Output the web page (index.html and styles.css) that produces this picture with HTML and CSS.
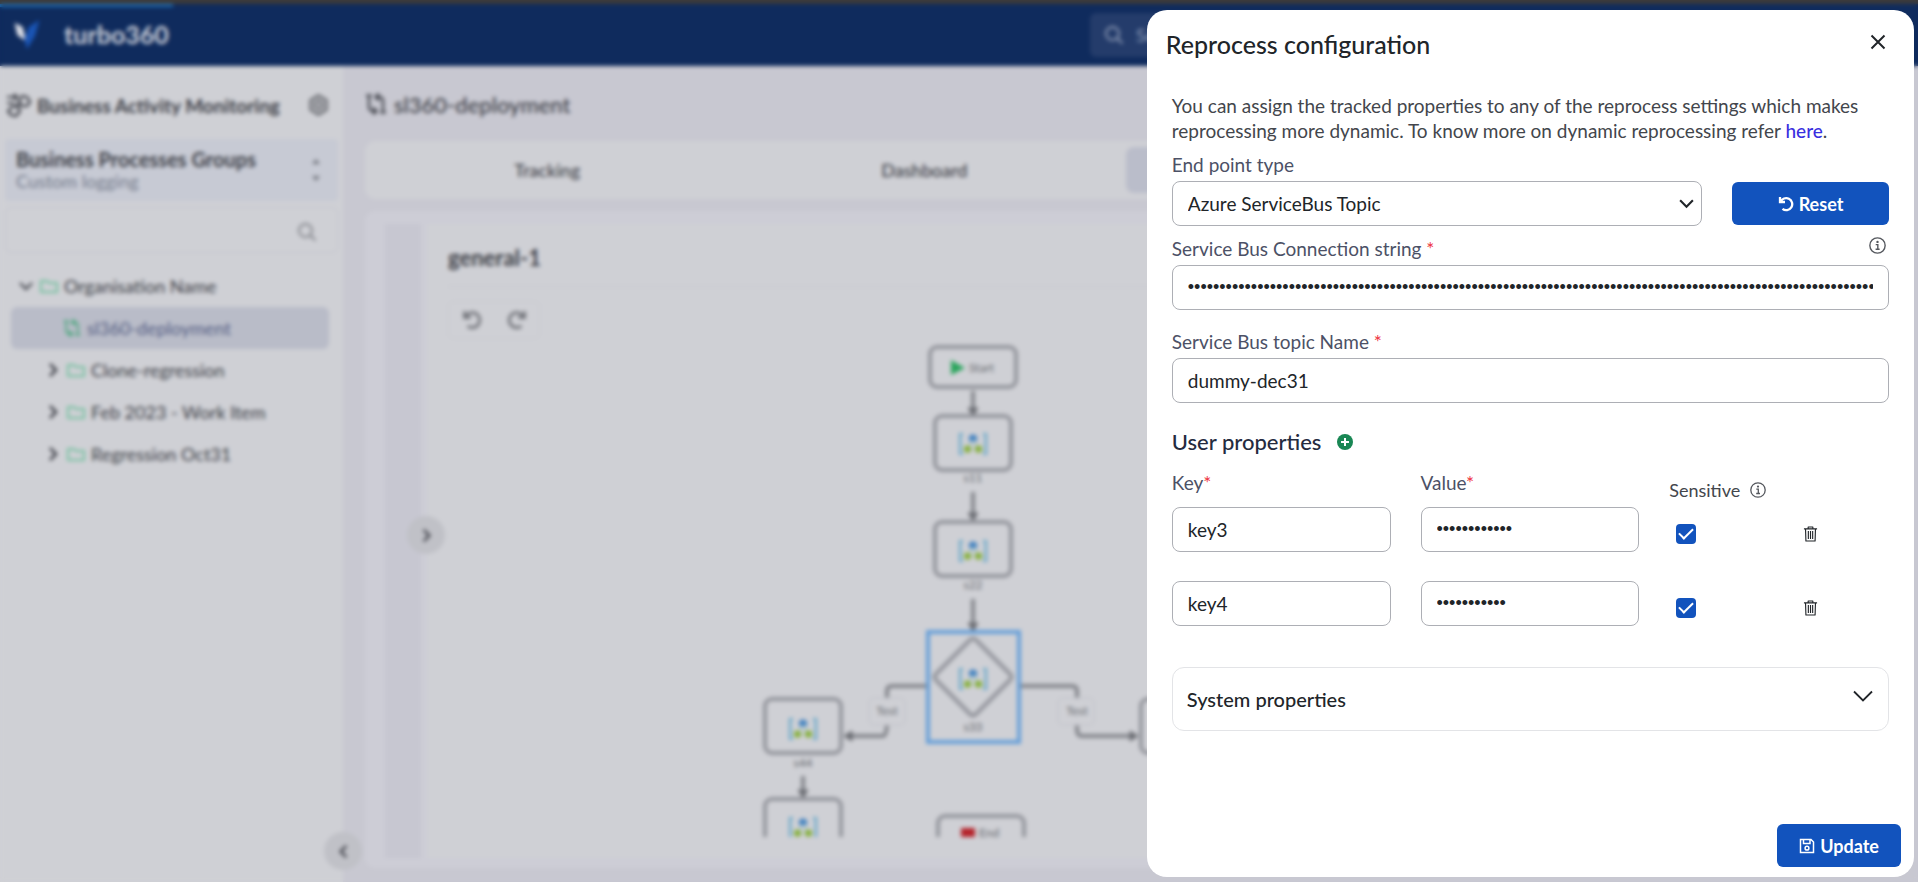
FILE: index.html
```html
<!DOCTYPE html>
<html lang="en">
<head>
<meta charset="utf-8">
<title>Business Activity Monitoring - Reprocess configuration</title>
<link rel="stylesheet" href="styles.css">
</head>
<body>
<svg class="defs" aria-hidden="true">
  <symbol id="folder" viewBox="0 0 20 16"><path d="M2 3.500v10h16V4.500h-8L8 2.500H2z" fill="none" stroke="currentColor" stroke-width="2" stroke-linejoin="round"/></symbol>
  <symbol id="process" viewBox="0 0 22 22"><path d="M4 2v12q0 4 4 4h3M8 14.500l3.500 3.500L8 21.500M18 20V8q0-4-4-4h-3M14 .5 10.500 4 14 7.500M1 2.500h6M15 19.500h6" fill="none" stroke="currentColor" stroke-width="2.200"/></symbol>
  <symbol id="search" viewBox="0 0 20 20"><circle cx="8.500" cy="8.500" r="6.500" fill="none" stroke="currentColor" stroke-width="2"/><path d="m13 13 5.500 5.500" stroke="currentColor" stroke-width="2"/></symbol>
  <symbol id="right" viewBox="0 0 16 16"><path d="m5 2 6 6-6 6" fill="none" stroke="currentColor" stroke-width="2.500"/></symbol>
  <symbol id="left" viewBox="0 0 16 16"><path d="M11 2 5 8l6 6" fill="none" stroke="currentColor" stroke-width="2.500"/></symbol>
  <symbol id="down" viewBox="0 0 16 16"><path d="m2 5 6 6 6-6" fill="none" stroke="currentColor" stroke-width="2"/></symbol>
  <symbol id="undo" viewBox="0 0 16 16"><path d="M2 1v5h5M2.600 6A6 6 0 1 1 4.500 12.800" fill="none" stroke="currentColor" stroke-width="2.300"/></symbol>
  <symbol id="info" viewBox="0 0 16 16"><circle cx="8" cy="8" r="7.200" fill="none" stroke="currentColor" stroke-width="1.300"/><circle cx="8" cy="4.600" r="1.100" fill="currentColor"/><path d="M6.300 7.200h2v4.200M6.200 11.500h3.800" fill="none" stroke="currentColor" stroke-width="1.300"/></symbol>
  <symbol id="trash" viewBox="0 0 16 18"><path d="M1 3.500h14M5.500 3.300V1.500h5v1.800M2.700 3.500l.4 13h9.800l.4-13M5.700 5.800v8.500M8 5.800v8.500M10.300 5.800v8.500" fill="none" stroke="currentColor" stroke-width="1.200" stroke-linejoin="round"/></symbol>
  <symbol id="db" viewBox="0 0 30 24"><path d="M4 1H1v22h3M26 1h3v22h-3" fill="none" stroke="#63a6c9" stroke-width="2.500"/><circle cx="15" cy="6" r="4.500" fill="#3f80c0"/><path d="M15 8 9 17h12z" fill="none" stroke="#a9c4c8" stroke-width="1.500"/><circle cx="9" cy="17.500" r="4" fill="#86b03c"/><circle cx="21" cy="17.500" r="4" fill="#86b03c"/></symbol>
</svg>

<div class="app">
  <div class="window-edge"></div>
  <header class="topbar">
    <div class="progress"></div>
    <svg class="logo" viewBox="0 0 30 34"><path d="M1 3 10 8 14 24 4 17z" fill="#dfe2ea"/><path d="M29 0 17 8 12 22 15 33 24 18z" fill="#1a55b5"/></svg>
    <span class="brand">turbo360</span>
    <div class="global-search"><svg><use href="#search"/></svg><span>Search</span></div>
  </header>

  <div class="columns">
    <aside class="sidebar">
      <div class="side-title">
        <svg class="bam" viewBox="0 0 26 26"><g fill="none" stroke="currentColor" stroke-width="2.200"><path d="m17 4 5 1 3 5-3 4-5 0-3-5zM8 14l5 1 2 4-4 5-5-1-3-4zM11 14l4-3M2 5h10M2 11h7M9 2l3 3-3 3"/></g></svg>
        <h2>Business Activity Monitoring</h2>
        <svg class="gear" viewBox="0 0 20 20"><path d="m10 1 7.500 4.500v9L10 19l-7.500-4.500v-9z" fill="none" stroke="currentColor" stroke-width="2.400"/><circle cx="10" cy="10" r="3.500" fill="none" stroke="currentColor" stroke-width="2.400"/></svg>
      </div>
      <div class="group">
        <div><strong>Business Processes Groups</strong><span>Custom logging</span></div>
        <svg viewBox="0 0 10 28"><path d="M1 8 5 3l4 5zM1 20l4 5 4-5z" fill="currentColor"/></svg>
      </div>
      <div class="side-search"><input type="search" aria-label="Search groups"><svg><use href="#search"/></svg></div>
      <ul class="tree">
        <li class="root"><svg class="chev"><use href="#down"/></svg><svg class="fold"><use href="#folder"/></svg>Organisation Name</li>
        <li class="selected"><svg class="proc"><use href="#process"/></svg>sl360-deployment</li>
        <li class="child"><svg class="chev"><use href="#right"/></svg><svg class="fold"><use href="#folder"/></svg>Clone-regression</li>
        <li class="child"><svg class="chev"><use href="#right"/></svg><svg class="fold"><use href="#folder"/></svg>Feb 2023 - Work Item</li>
        <li class="child"><svg class="chev"><use href="#right"/></svg><svg class="fold"><use href="#folder"/></svg>Regression Oct31</li>
      </ul>
      <button class="round collapse" aria-label="Collapse sidebar"><svg><use href="#left"/></svg></button>
    </aside>

    <main class="main">
      <h1 class="page-title"><svg><use href="#process"/></svg>sl360-deployment</h1>
      <nav class="tabs">
        <button>Tracking</button><button>Dashboard</button><button class="active">Business Process</button><button>Settings</button>
      </nav>
      <section class="panel">
        <div class="strip"><button class="round expand" aria-label="Expand"><svg><use href="#right"/></svg></button></div>
        <div class="designer">
          <h3>general-1</h3>
          <div class="tools"><button aria-label="Undo"><svg><use href="#undo"/></svg></button><button aria-label="Redo"><svg class="flip"><use href="#undo"/></svg></button></div>
          <svg class="flow">
            <path class="lines" d="M525 52v20M525 153v24M525 260v32M342 0M355 437v18M479 347h-35q-5 0-5 5v30q0 15-4 15h-34M571 347h53q5 0 5 5v38q0 7 5 7h50"/>
            <path class="heads" d="m520 69 5 8 5-8zM520 174l5 8 5-8zM520 284l5 8 5-8zM350 451l5 8 5-8zM404 392l-8 5 8 5zM682 392l8 5-8 5z"/>
            <g class="node">
              <rect x="482" y="8" width="86" height="40" rx="7"/>
              <rect x="487" y="77" width="76" height="54" rx="7"/>
              <rect x="487" y="183" width="76" height="54" rx="7"/>
              <rect x="317" y="360" width="76" height="54" rx="7"/>
              <rect x="317" y="460" width="76" height="54" rx="7"/>
              <rect x="693" y="360" width="76" height="54" rx="7"/>
              <rect x="490" y="477" width="86" height="40" rx="7"/>
              <path d="m522 301-34 34q-3 3 0 6l34 34q3 3 6 0l34-34q3-3 0-6l-34-34q-3-3-6 0z"/>
            </g>
            <rect class="picked" x="480" y="293" width="91" height="110"/>
            <rect class="chip" x="421" y="359" width="36" height="27" rx="5"/><rect class="chip" x="610" y="359" width="36" height="27" rx="5"/>
            <use href="#db" x="510" y="94" width="30" height="22"/><use href="#db" x="510" y="201" width="30" height="22"/><use href="#db" x="510" y="329" width="30" height="22"/><use href="#db" x="340" y="379" width="30" height="22"/><use href="#db" x="340" y="478" width="30" height="22"/>
            <path d="M503 21v15l14-7z" fill="#2ba55d"/><rect x="513" y="489" width="14" height="9" fill="#b5232b"/>
            <g class="captions"><text x="521" y="33">Start</text><text x="531" y="498">End</text></g>
            <g class="names"><text x="525" y="143">s11</text><text x="525" y="250">s22</text><text x="525" y="392">s33</text><text x="355" y="428">s44</text><text x="439" y="376">Test</text><text x="629" y="376">Test</text></g>
          </svg>
        </div>
      </section>
    </main>
  </div>
</div>

<div class="overlay">
  <form class="dialog" role="dialog" aria-labelledby="dlg-title">
    <header class="dialog-head">
      <h2 id="dlg-title">Reprocess configuration</h2>
      <button type="button" class="close" aria-label="Close"><svg viewBox="0 0 16 16"><path d="m1.500 1.500 13 13M14.500 1.500l-13 13" stroke="currentColor" stroke-width="2"/></svg></button>
    </header>
    <div class="dialog-body">
      <p class="intro">You can assign the tracked properties to any of the reprocess settings which makes reprocessing more dynamic. To know more on dynamic reprocessing refer <a href="#">here</a>.</p>

      <label class="label" for="endpoint">End point type</label>
      <div class="endpoint">
        <div class="select"><select id="endpoint"><option>Azure ServiceBus Topic</option></select><svg><use href="#down"/></svg></div>
        <button type="button" class="primary"><svg><use href="#undo"/></svg>Reset</button>
      </div>

      <div class="label-row"><label class="label" for="conn">Service Bus Connection string <b>*</b></label><svg class="info"><use href="#info"/></svg></div>
      <input class="field" id="conn" type="password" value="Endpoint=sb://demo.servicebus.example/;SharedAccessKeyName=RootManageSharedAccessKey;SharedAccessKey=00000000">

      <label class="label topic" for="topic">Service Bus topic Name <b>*</b></label>
      <input class="field" id="topic" type="text" value="dummy-dec31">

      <h3 class="section">User properties <button type="button" class="add" aria-label="Add property"><svg viewBox="0 0 16 16"><circle cx="8" cy="8" r="8" fill="#198754"/><path d="M8 4v8M4 8h8" stroke="#fff" stroke-width="2"/></svg></button></h3>

      <div class="props">
        <label class="label" for="key3">Key<b>*</b></label>
        <label class="label" for="val3">Value<b>*</b></label>
        <span class="sensitive">Sensitive <svg class="info"><use href="#info"/></svg></span>
        <span></span>

        <input class="field" id="key3" type="text" value="key3">
        <input class="field" id="val3" type="password" value="secretvalue1">
        <input class="check" type="checkbox" aria-label="Sensitive key3" checked>
        <button type="button" class="trash" aria-label="Delete key3"><svg><use href="#trash"/></svg></button>

        <input class="field" type="text" aria-label="Key" value="key4">
        <input class="field" type="password" aria-label="Value" value="secretvalue">
        <input class="check" type="checkbox" aria-label="Sensitive key4" checked>
        <button type="button" class="trash" aria-label="Delete key4"><svg><use href="#trash"/></svg></button>
      </div>

      <button type="button" class="accordion">System properties<svg viewBox="0 0 20 12"><path d="m1 1.500 9 9 9-9" fill="none" stroke="currentColor" stroke-width="1.800"/></svg></button>
    </div>
    <footer class="dialog-foot">
      <button type="submit" class="primary"><svg viewBox="0 0 16 16"><path d="M1.500 1.500h10.500l2.500 2.500v10.500h-13zM4.500 1.500v4h6.500v-4" fill="none" stroke="currentColor" stroke-width="1.500"/><circle cx="8" cy="10.200" r="1.900" fill="none" stroke="currentColor" stroke-width="1.500"/></svg>Update</button>
    </footer>
  </form>
</div>
</body>
</html>
```
FILE: styles.css
```css
* { box-sizing: border-box; }
html, body { height: 100%; }
body {
  margin: 0;
  overflow: hidden;
  font-family: Lato, "Open Sans", sans-serif;
  font-size: 18px;
  color: #212529;
  background: #c8c8d1;
}
button, input, select { font: inherit; color: inherit; }
button { padding: 0; border: 0; background: none; }
h1, h2, h3, p, ul { margin: 0; padding: 0; }
svg { display: block; flex: none; }
.defs { position: absolute; width: 0; height: 0; }

/* Application behind the dialog */
.app { isolation: isolate; display: flex; flex-direction: column; height: 100vh; color: #3d3f47; }
.window-edge { height: 4px; flex: none; background: #3d3b3a; }
.topbar { position: relative; display: flex; align-items: center; flex: none; height: 62px; padding: 0 12px; background: #0f2b5d; }
.progress { position: absolute; left: 0; top: 0; width: 9%; height: 3px; background: #1a68b0; }
.logo { width: 30px; height: 30px; margin-right: 22px; }
.brand { font-size: 25px; font-weight: 700; line-height: 28px; padding-bottom: 2px; color: #ccd0da; }
.global-search { position: absolute; left: 1090px; display: flex; align-items: center; gap: 12px; width: 360px; height: 44px; padding: 0 14px; border-radius: 6px; background: #243c6b; color: #8d9ab5; }
.global-search svg { width: 20px; height: 20px; }

.columns { display: flex; flex: 1; min-height: 0; }
.sidebar { position: relative; flex: none; width: 343px; padding: 19px 5px 0; background: #cfd0d5; }
.side-title { display: flex; align-items: center; height: 40px; margin-bottom: 14px; padding-right: 9px; }
.side-title h2 { flex: 1; margin-left: 6px; font-size: 19px; font-weight: 700; white-space: nowrap; }
.bam { width: 26px; height: 26px; }
.gear { width: 21px; height: 22px; color: #65676d; }
.group { display: flex; justify-content: space-between; align-items: center; height: 62px; padding: 0 17px 0 11px; border-radius: 4px; background: #c7cad4; }
.group strong, .group span { display: block; line-height: 22px; }
.group strong { font-size: 20px; font-weight: 700; }
.group span { color: #747b8b; }
.group svg { width: 10px; height: 28px; color: #74777f; }
.side-search { display: flex; align-items: center; height: 46px; margin: 6px 0 12px; padding: 4px 20px 0 0; border: 1px solid #c5c6cd; border-radius: 6px; }
.side-search input { flex: 1; min-width: 0; border: 0; background: none; }
.side-search svg { width: 20px; height: 20px; color: #84868c; }
.tree { list-style: none; }
.tree li { display: flex; align-items: center; height: 42px; margin: 0 9px 0 6px; border-radius: 6px; }
.tree .root { padding-left: 7px; }
.tree .child { padding-left: 34px; }
.tree .selected { padding-left: 52px; background: #b9bcc8; color: #545d83; }
.chev { width: 16px; height: 16px; margin-right: 5px; }
.fold { width: 20px; height: 17px; margin-right: 5px; color: #74c09f; }
.proc { width: 18px; height: 18px; margin-right: 6px; color: #4aa67c; }
.round { position: absolute; display: grid; place-items: center; width: 38px; height: 38px; border-radius: 50%; background: #c0c1c7; }
.round svg { width: 15px; height: 15px; }
.collapse { right: -19px; bottom: 12px; z-index: 1; }
.expand { right: -24px; top: 292px; }

.main { display: flex; flex-direction: column; flex: 1; min-width: 0; padding: 17px 57px 14px 22px; }
.page-title { display: flex; align-items: center; gap: 7px; height: 42px; margin-bottom: 16px; font-size: 22px; font-weight: 500; }
.page-title svg { width: 22px; height: 22px; }
.tabs { display: grid; grid-template-columns: repeat(4, 1fr); gap: 25px; margin-bottom: 12px; padding: 6px; border-radius: 10px; background: #cfd0d5; }
.tabs button { height: 46px; border-radius: 8px; font-weight: 500; }
.tabs .active { background: #babdca; }
.panel { display: flex; flex: 1; min-height: 0; gap: 6px; padding: 13px 20px 10px; border-radius: 10px; background: #cdcdd6; }
.strip { position: relative; flex: none; width: 36px; background: #c7c7d1; }
.designer { display: flex; flex-direction: column; flex: 1; min-width: 0; padding: 12px 21px 21px; background: #cfd0d5; }
.designer h3 { flex: none; height: 51px; padding-top: 8px; border-bottom: 1px solid #c6c7cd; font-size: 22px; line-height: 28px; }
.tools { display: flex; align-items: center; justify-content: space-around; flex: none; width: 92px; height: 38px; margin-top: 14px; border: 1px solid #c8c9cf; border-radius: 6px; color: #74767c; }
.tools svg { width: 20px; height: 20px; }
.flip { transform: scaleX(-1); }
.flow { flex: 1; width: 100%; min-height: 0; }
.lines { fill: none; stroke: #85878d; stroke-width: 4; }
.heads { fill: #6c6e74; stroke: #6c6e74; }
.node { fill: none; stroke: #94969d; stroke-width: 4; }
.picked { fill: none; stroke: #669fd9; stroke-width: 4; }
.chip { fill: #cfd0d5; stroke: #c0c1c8; }
.captions, .names { fill: #66686e; font-size: 12px; }
.names { text-anchor: middle; }

/* Dialog */
.overlay { position: fixed; inset: 0; display: flex; justify-content: flex-end; padding: 10px 4px 5px; backdrop-filter: blur(2px); }
.dialog { display: flex; flex-direction: column; width: 40vw; min-width: 640px; border-radius: 20px; background: #fff; }
.dialog-head { display: flex; align-items: center; justify-content: space-between; padding: 18px 28px 0 19px; }
.dialog-head h2 { font-size: 25px; font-weight: 500; line-height: 32px; }
.close svg { width: 16px; height: 16px; margin-bottom: 4px; }
.dialog-body { flex: 1; padding: 33px 25px 0; }
.intro { margin-bottom: 10px; color: #43464c; font-size: 19px; line-height: 25px; }
.intro a { color: #3a2fe0; text-decoration: none; font-weight: 500; }
.label { display: block; font-size: 19px; line-height: 24px; color: #4c5166; }
.label b { color: #ee3340; font-weight: 400; }
.endpoint { display: flex; align-items: center; gap: 30px; margin: 4px 0 11px; }
.select { position: relative; flex: 1; }
.select select { width: 100%; height: 45px; padding: 0 15px; border: 1px solid #adafb5; border-radius: 8px; background: #fff; font-size: 19px; appearance: none; }
.select svg { position: absolute; right: 7px; top: 14px; width: 17px; height: 17px; pointer-events: none; }
.primary { display: flex; align-items: center; justify-content: center; gap: 5px; height: 43px; padding: 0 22px; border-radius: 6px; background: #1253bd; color: #fff; font-weight: 700; }
.primary svg { width: 16px; height: 16px; }
.endpoint .primary { width: 157px; }
.label-row { display: flex; justify-content: space-between; padding-right: 3px; }
.info { width: 17px; height: 17px; color: #55585e; }
.field { display: block; width: 100%; height: 45px; padding: 0 15px; border: 1px solid #adafb5; border-radius: 8px; background: #fff; font-size: 19px; }
.field[type="password"] { font-family: "Liberation Sans", Arial, sans-serif; font-size: 18px; }
.label-row .label, .topic { margin-bottom: 4px; }
.topic { margin-top: 20px; }
.section { display: flex; align-items: center; gap: 16px; margin: 25px 0 15px; font-size: 22px; font-weight: 500; line-height: 28px; color: #252b3f; }
.add svg { width: 16px; height: 16px; }
.props { display: grid; grid-template-columns: 219fr 219fr 104fr 86fr; column-gap: 30px; row-gap: 29px; align-items: center; }
.props .label, .props > span { margin-bottom: -23px; }
.props .label { align-self: start; }
.sensitive { display: flex; align-items: center; gap: 10px; padding-top: 8px; color: #43464c; white-space: nowrap; }
.sensitive .info { width: 16px; height: 16px; }
.check { appearance: none; width: 20px; height: 20px; margin: 8px 7px 0; border-radius: 4px; background: #1253bd; display: grid; place-items: center; }
.check::after { content: ""; width: 12px; height: 6px; margin-top: -4px; border: solid #fff; border-width: 0 0 2px 2px; transform: rotate(-45deg); }
.trash { width: 16px; margin-top: 8px; }
.trash svg { width: 15px; height: 18px; }
.accordion { display: flex; align-items: center; justify-content: space-between; width: 100%; height: 64px; margin-top: 41px; padding: 0 15px 0 14px; border: 1px solid #e3e4e7; border-radius: 12px; font-size: 20px; font-weight: 500; }
.accordion svg { width: 20px; height: 12px; margin-bottom: 6px; }
.dialog-foot { display: flex; justify-content: flex-end; padding: 0 13px 10px; }
```
